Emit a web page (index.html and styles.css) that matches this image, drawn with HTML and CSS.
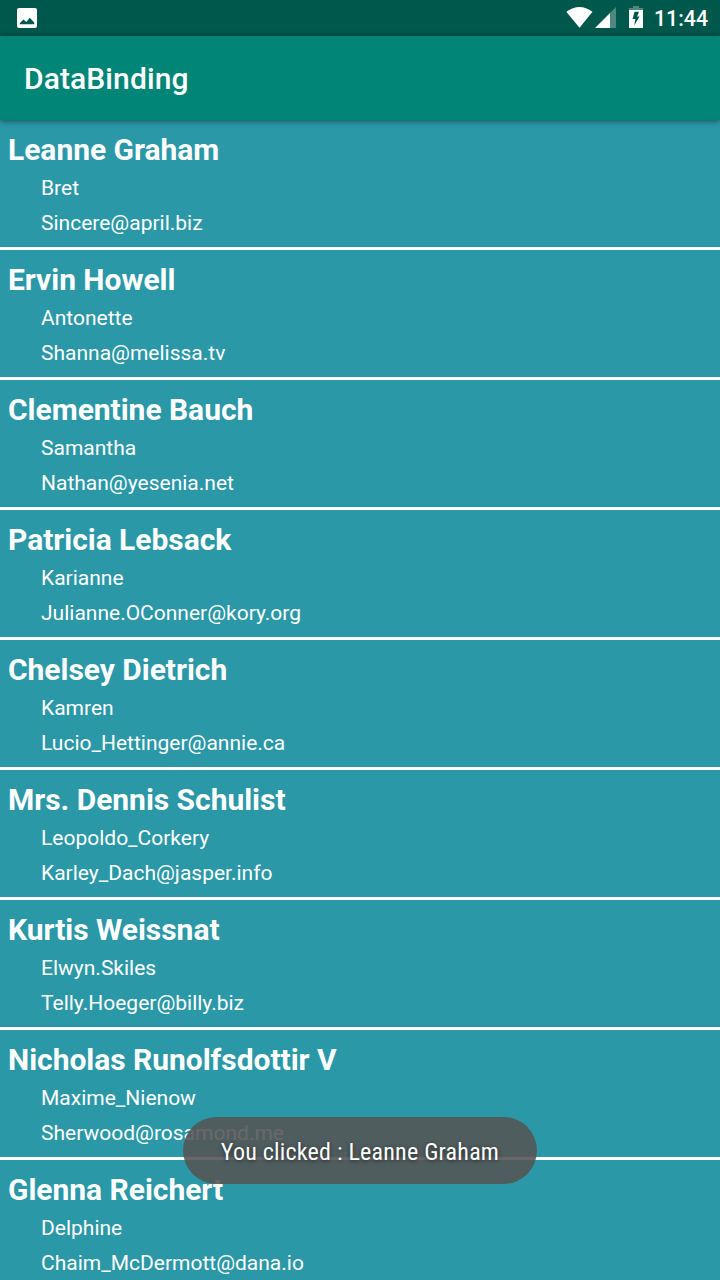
FILE: index.html
```html
<!DOCTYPE html>
<html lang="en">
<head>
<meta charset="utf-8">
<title>DataBinding</title>
<link rel="stylesheet" href="styles.css">
</head>
<body>
<div class="screen">
  <header class="status">
    <svg class="picture" width="20" height="20" viewBox="0 0 20 20"><path fill="#fff" fill-rule="evenodd" d="M2 0h16Q20 0 20 2v16Q20 20 18 20H2Q0 20 0 18V2Q0 0 2 0ZM2.800 16.300H17.200V14.500L14.400 11.500L12.800 9.800L9.300 14L6.400 11.500L2.800 15.300Z"/></svg>
    <div class="indicators">
      <svg width="88" height="36" viewBox="566 0 88 36"><path fill="#fff" d="M566.300 11.800Q579.500 2.200 592.500 11.800L579.500 27.800Z"/><path fill="#fff" fill-opacity=".3" d="M616 7v21h-6V13Z"/><path fill="#fff" d="M610 13v15h-15Z"/><path fill="#fff" fill-opacity=".3" d="M633 6h6v2h4v2h-14V8h4Z"/><path fill="#fff" fill-rule="evenodd" d="M629 10h14v18h-14ZM634.500 11.800h4.500l-1.900 4.700h2.400l-5.200 9 1-6.500h-2.800Z"/></svg>
      <span class="time">11:44</span>
    </div>
  </header>
  <div class="appbar"><h1>DataBinding</h1></div>
  <main class="list">
    <section class="row"><h2>Leanne Graham</h2><p>Bret</p><p>Sincere@april.biz</p></section>
    <section class="row"><h2>Ervin Howell</h2><p>Antonette</p><p>Shanna@melissa.tv</p></section>
    <section class="row"><h2>Clementine Bauch</h2><p>Samantha</p><p>Nathan@yesenia.net</p></section>
    <section class="row"><h2>Patricia Lebsack</h2><p>Karianne</p><p>Julianne.OConner@kory.org</p></section>
    <section class="row"><h2>Chelsey Dietrich</h2><p>Kamren</p><p>Lucio_Hettinger@annie.ca</p></section>
    <section class="row"><h2>Mrs. Dennis Schulist</h2><p>Leopoldo_Corkery</p><p>Karley_Dach@jasper.info</p></section>
    <section class="row"><h2>Kurtis Weissnat</h2><p>Elwyn.Skiles</p><p>Telly.Hoeger@billy.biz</p></section>
    <section class="row"><h2>Nicholas Runolfsdottir V</h2><p>Maxime_Nienow</p><p>Sherwood@rosamond.me</p></section>
    <section class="row"><h2>Glenna Reichert</h2><p>Delphine</p><p>Chaim_McDermott@dana.io</p></section>
  </main>
  <div class="toast"><span>You clicked : Leanne Graham</span></div>
</div>
</body>
</html>
```
FILE: styles.css
```css
* { box-sizing: border-box; }
body { margin: 0; font-family: Roboto, sans-serif; color: #fff; }
h1, h2, p { margin: 0; white-space: nowrap; }
.screen { position: relative; display: flex; flex-direction: column; width: 720px; height: 1280px; overflow: hidden; background: #2b98a7; }
.status { flex: none; height: 36px; padding: 0 12px 0 17px; display: flex; align-items: center; justify-content: space-between; background: #00574b; }
.indicators { display: flex; align-items: center; }
.indicators svg { display: block; }
.time { font-size: 21.3px; font-weight: 500; line-height: 36px; padding-top: 1px; }
.appbar { flex: none; height: 84px; padding: 1px 24px 0; display: flex; align-items: center; background: #008577; box-shadow: 0 1px 6px rgba(0,0,0,.5); z-index: 1; }
.appbar h1 { font-size: 30px; font-weight: 500; line-height: 36px; letter-spacing: .1px; }
.list { flex: none; }
.row { height: 130px; padding: 12px 8px 0; border-bottom: 3px solid #fff; }
.row h2 { font-size: 30px; font-weight: 700; line-height: 36px; margin-bottom: 3px; letter-spacing: -.03px; }
.row p { font-size: 21px; line-height: 35px; padding-left: 33px; }
.toast { position: absolute; left: 183px; top: 1117px; width: 354px; height: 67px; padding-top: 2px; border-radius: 34px; display: flex; align-items: center; justify-content: center; background: rgba(85,85,85,.89); font-size: 24px; font-family: "Roboto Condensed", Roboto, sans-serif; font-stretch: 75%; letter-spacing: .22px; }
.toast span { white-space: nowrap; text-shadow: 0 1px 4px rgba(0,0,0,.6); }
```
